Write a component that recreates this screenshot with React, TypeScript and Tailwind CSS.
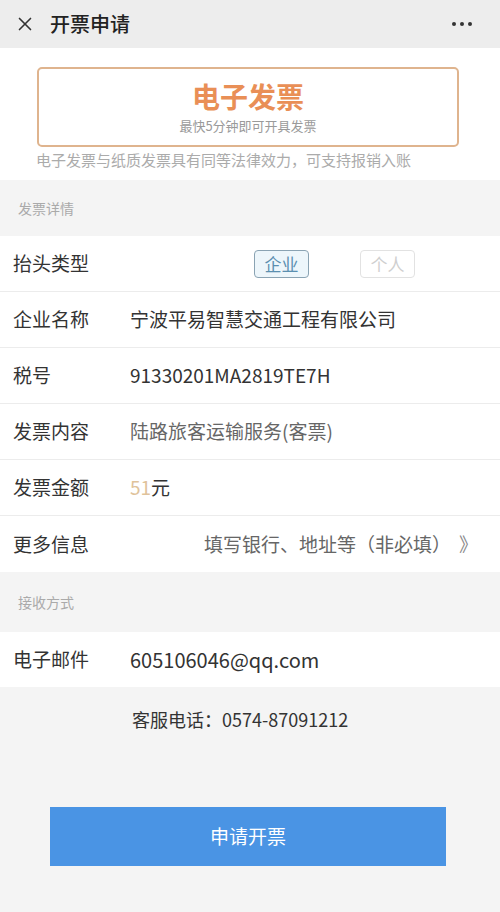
import { X } from "lucide-react";

const font = { fontFamily: '"Noto Sans CJK SC", "Noto Sans", Roboto, sans-serif' };

const Row = ({ label, children, last }: { label: string; children?: React.ReactNode; last?: boolean }) => (
  <div className={`flex items-center h-[56px] bg-white pl-[13px] ${last ? "" : "border-b border-[#ececec]"}`}>
    <span className="w-[117px] shrink-0 text-[19px] text-[#333]">{label}</span>
    {children}
  </div>
);

const App = () => {
  return (
    <div className="w-[500px] min-h-[912px] bg-[#f4f4f4]" style={font}>
      {/* top bar */}
      <div className="h-[48px] bg-[#ededed] flex items-center pl-[14px] pr-[28px]">
        <X className="h-[22px] w-[22px] text-[#333]" strokeWidth={1.8} />
        <span className="ml-[14px] text-[20px] font-medium text-[#222]">开票申请</span>
        <div className="ml-auto flex gap-[4px]">
          <span className="h-[4px] w-[4px] rounded-full bg-[#333]" />
          <span className="h-[4px] w-[4px] rounded-full bg-[#333]" />
          <span className="h-[4px] w-[4px] rounded-full bg-[#333]" />
        </div>
      </div>

      {/* invoice type card */}
      <div className="bg-white pt-[19px] h-[132px] px-[37px]">
        <div className="h-[80px] w-[422px] border-2 border-[#dfb48e] rounded-[5px] flex flex-col items-center justify-center">
          <span className="text-[28px] leading-[34px] font-bold text-[#e98f56]">电子发票</span>
          <span className="mt-[3px] text-[13px] text-[#9a9a9a]">最快5分钟即可开具发票</span>
        </div>
        <p className="mt-[3px] text-[15px] leading-[20px] text-[#ababab] -ml-[1px]">电子发票与纸质发票具有同等法律效力，可支持报销入账</p>
      </div>

      <div className="h-[56px] flex items-center pl-[18px] text-[14px] text-[#aaa]">发票详情</div>

      <Row label="抬头类型">
        <div className="flex items-center ml-[124px]">
          <span className="h-[28px] w-[55px] flex items-center justify-center rounded-[4px] border-[1.5px] border-[#8aa3b3] bg-[#edf6fb] text-[17px] text-[#5b8fb0]">企业</span>
          <span className="ml-[51px] h-[28px] w-[55px] flex items-center justify-center rounded-[4px] border-[1.5px] border-[#e2e2e2] text-[17px] text-[#cfcfcf]">个人</span>
        </div>
      </Row>
      <Row label="企业名称">
        <span className="text-[19px] text-[#333]">宁波平易智慧交通工程有限公司</span>
      </Row>
      <Row label="税号">
        <span className="text-[19px] text-[#333]">91330201MA2819TE7H</span>
      </Row>
      <Row label="发票内容">
        <span className="text-[19px] text-[#666]">陆路旅客运输服务(客票)</span>
      </Row>
      <Row label="发票金额">
        <span className="text-[19px] text-[#333]">
          <span className="text-[#e0c39b]">51</span>元
        </span>
      </Row>
      <Row label="更多信息" last>
        <div className="ml-auto flex items-center pr-[22px] text-[19px] text-[#666]">
          <span>填写银行、地址等（非必填）</span>
          <span className="ml-[8px] text-[#888]">》</span>
        </div>
      </Row>

      <div className="h-[60px] flex items-center pl-[18px] text-[14px] text-[#aaa]">接收方式</div>

      <div className="flex items-center h-[55px] bg-white pl-[13px]">
        <span className="w-[117px] shrink-0 text-[19px] text-[#333]">电子邮件</span>
        <span className="text-[20px] text-[#333]">605106046@qq.com</span>
      </div>

      <div className="h-[64px] flex items-center pl-[132px] text-[18px] text-[#333]">客服电话：0574-87091212</div>

      <div className="pt-[56px] px-[50px]">
        <button className="h-[59px] w-[396px] bg-[#4a94e4] text-white text-[19px] flex items-center justify-center">申请开票</button>
      </div>
    </div>
  );
};

export default App;
